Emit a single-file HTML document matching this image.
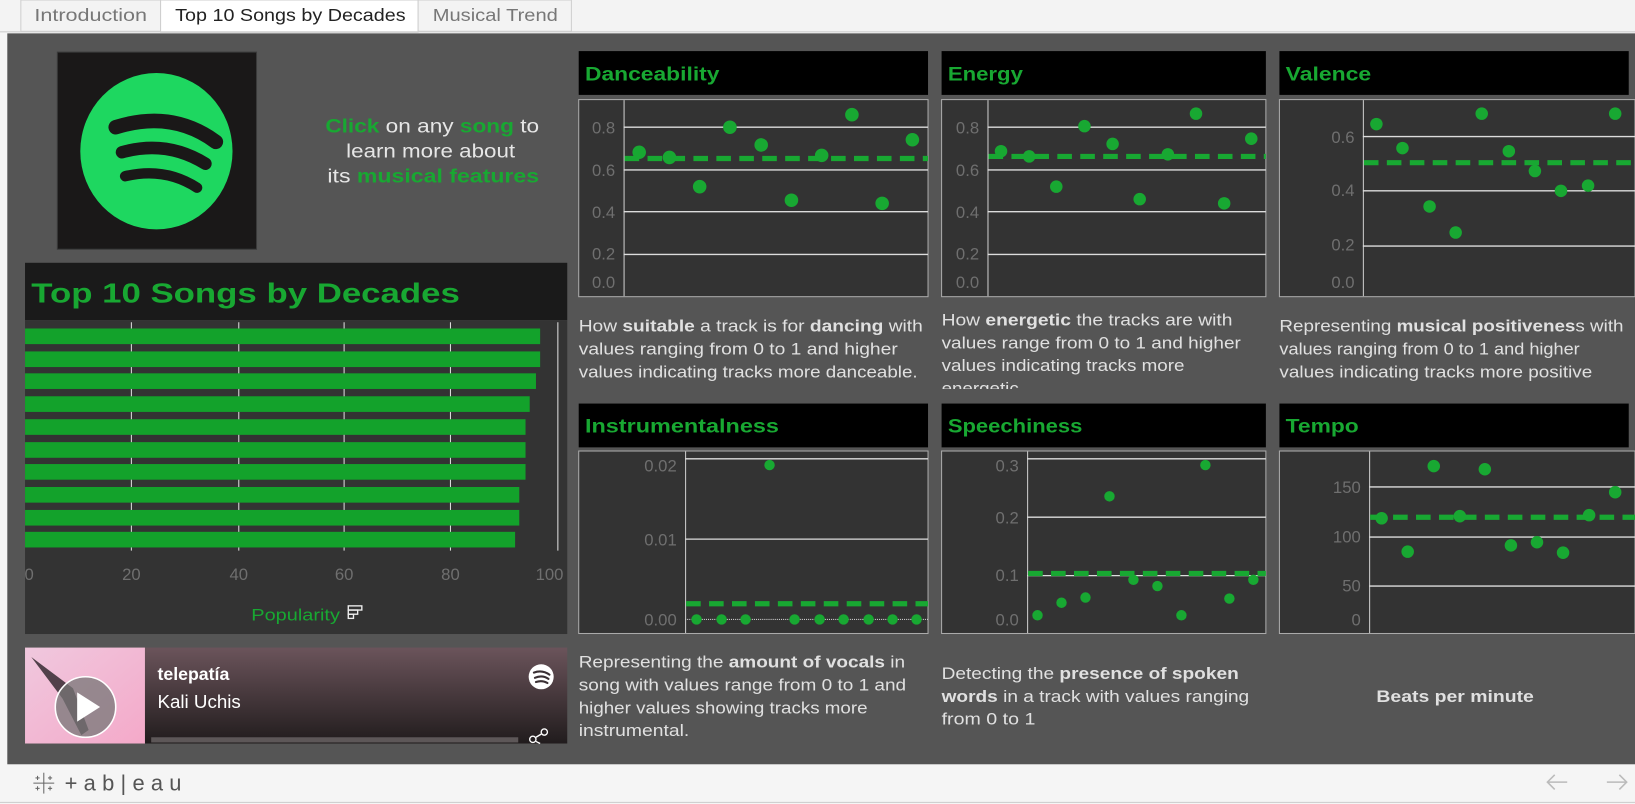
<!DOCTYPE html>
<html><head><meta charset="utf-8"><style>
html,body{margin:0;padding:0;width:1635px;height:804px;overflow:hidden;background:#f5f5f5}
svg{display:block}
text{font-family:"Liberation Sans",sans-serif}
</style></head><body>
<svg width="1635" height="804" viewBox="0 0 1568 771" preserveAspectRatio="none" xmlns="http://www.w3.org/2000/svg">
<!-- tab bar -->
<rect x="0" y="0" width="1568" height="31" fill="#f3f3f3"/>
<rect x="20" y="0" width="134" height="30" fill="#f3f3f3" stroke="#cfcfcf"/>
<rect x="154" y="0" width="247" height="31" fill="#ffffff" stroke="#cfcfcf"/>
<rect x="401" y="0" width="147" height="30" fill="#f3f3f3" stroke="#cfcfcf"/>
<line x1="0" y1="30.5" x2="1568" y2="30.5" stroke="#cfcfcf"/>
<text x="33" y="20" font-size="17" fill="#777" textLength="108" lengthAdjust="spacingAndGlyphs">Introduction</text>
<text x="168" y="20" font-size="17" fill="#222" textLength="221" lengthAdjust="spacingAndGlyphs">Top 10 Songs by Decades</text>
<text x="415" y="20" font-size="17" fill="#777" textLength="120" lengthAdjust="spacingAndGlyphs">Musical Trend</text>
<!-- dashboard -->
<rect x="7" y="32" width="1561" height="701" fill="#555555"/>
<!-- footer -->
<rect x="0" y="733" width="1568" height="38" fill="#f5f5f5"/>
<line x1="0" y1="769.5" x2="1568" y2="769.5" stroke="#d0d0d0"/>
<g stroke="#666" stroke-width="1">
<line x1="42" y1="741" x2="42" y2="761"/><line x1="32" y1="751" x2="52" y2="751"/>
<line x1="36" y1="744" x2="36" y2="748"/><line x1="34" y1="746" x2="38" y2="746"/>
<line x1="48" y1="744" x2="48" y2="748"/><line x1="46" y1="746" x2="50" y2="746"/>
<line x1="36" y1="754" x2="36" y2="758"/><line x1="34" y1="756" x2="38" y2="756"/>
<line x1="48" y1="754" x2="48" y2="758"/><line x1="46" y1="756" x2="50" y2="756"/>
</g>
<text x="62" y="758" font-size="21" fill="#555" letter-spacing="6">+ab|eau</text>
<g stroke="#bbb" stroke-width="1.5" fill="none">
<path d="M1503 750 H1484 M1491 743 L1484 750 L1491 757"/>
<path d="M1541 750 H1560 M1553 743 L1560 750 L1553 757"/>
</g>
<!-- spotify logo -->
<rect x="55" y="50" width="191" height="189" fill="#1a1818" stroke="#3a3a3a"/>
<ellipse cx="150" cy="145" rx="73" ry="75" fill="#1ed760"/>
<g stroke="#1a1818" stroke-linecap="round" fill="none">
<path d="M111 122 Q165 105 207 136" stroke-width="14"/>
<path d="M117 146 Q160 134 197 157" stroke-width="12"/>
<path d="M120 169 Q158 160 189 180" stroke-width="10"/>
</g>
<g font-size="18.5" fill="#e6e6e6">
<text x="312" y="127" textLength="205" lengthAdjust="spacingAndGlyphs"><tspan fill="#18a832" font-weight="bold">Click</tspan> on any <tspan fill="#18a832" font-weight="bold">song</tspan> to</text>
<text x="332" y="151" textLength="162" lengthAdjust="spacingAndGlyphs">learn more about</text>
<text x="314" y="175" textLength="203" lengthAdjust="spacingAndGlyphs">its <tspan fill="#18a832" font-weight="bold">musical features</tspan></text>
</g>
<!-- bar chart -->
<rect x="24" y="252" width="520" height="55" fill="#1a1a1a"/>
<text x="30" y="290" font-size="27" font-weight="bold" fill="#18a832" textLength="411" lengthAdjust="spacingAndGlyphs">Top 10 Songs by Decades</text>
<rect x="24" y="307" width="520" height="301" fill="#333"/>
<g stroke="#ddd" stroke-width="1">
<line x1="126" y1="309" x2="126" y2="528"/><line x1="229" y1="309" x2="229" y2="528"/>
<line x1="330" y1="309" x2="330" y2="528"/><line x1="432" y1="309" x2="432" y2="528"/>
<line x1="535" y1="309" x2="535" y2="528"/>
</g>
<g fill="#13a22b">
<rect x="24" y="315" width="494" height="15"/>
<rect x="24" y="337" width="494" height="15"/>
<rect x="24" y="358" width="490" height="15"/>
<rect x="24" y="380" width="484" height="15"/>
<rect x="24" y="402" width="480" height="15"/>
<rect x="24" y="424" width="480" height="15"/>
<rect x="24" y="445" width="480" height="15"/>
<rect x="24" y="467" width="474" height="15"/>
<rect x="24" y="489" width="474" height="15"/>
<rect x="24" y="510" width="470" height="15"/>
</g>
<g font-size="16" fill="#6f6f6f" text-anchor="middle">
<text x="28" y="556">0</text><text x="126" y="556">20</text><text x="229" y="556">40</text><text x="330" y="556">60</text><text x="432" y="556">80</text><text x="527" y="556">100</text>
</g>
<text x="241" y="595" font-size="16" fill="#18a832" textLength="85" lengthAdjust="spacingAndGlyphs">Popularity</text>
<g fill="none" stroke="#eee" stroke-width="1.3"><rect x="334" y="581" width="13" height="4"/><rect x="334" y="585" width="9" height="4"/><rect x="334" y="589" width="5" height="4"/></g>
<!-- player -->
<defs>
<linearGradient id="pg" x1="0" y1="0" x2="0" y2="1"><stop offset="0" stop-color="#6b545b"/><stop offset="1" stop-color="#211c1d"/></linearGradient>
<linearGradient id="ag" x1="0" y1="0" x2="1" y2="1"><stop offset="0" stop-color="#f0c8de"/><stop offset="1" stop-color="#f4a9c9"/></linearGradient>
</defs>
<rect x="139" y="621" width="405" height="92" fill="url(#pg)"/>
<rect x="24" y="621" width="115" height="92" fill="url(#ag)"/>
<path d="M30 630 L70 660 L85 700 L78 705 L60 670 Z" fill="#2b2027" opacity="0.8"/>
<circle cx="82" cy="678" r="29" fill="#777" fill-opacity="0.75" stroke="#fff" stroke-width="1.5"/>
<path d="M74 664 L96 678 L74 692 Z" fill="#fff"/>
<text x="151" y="652" font-size="17" font-weight="bold" fill="#fff">telepatía</text>
<text x="151" y="679" font-size="18" fill="#fff">Kali Uchis</text>
<circle cx="519" cy="649" r="12" fill="#fff"/>
<g stroke="#3a2f33" stroke-width="2" fill="none" stroke-linecap="round"><path d="M512 645 Q520 642 527 647"/><path d="M513 650 Q520 647 526 651"/><path d="M514 654 Q520 652 525 655"/></g>
<rect x="145" y="707" width="352" height="5" fill="#5d5758"/>
<g stroke="#fff" stroke-width="1.3" fill="none"><circle cx="522" cy="702" r="3"/><circle cx="511" cy="709" r="3"/><line x1="519" y1="704" x2="514" y2="707"/><line x1="514" y1="711" x2="518" y2="713"/></g>

<!-- feature panels -->
<g font-size="19" font-weight="bold" fill="#18a832">
<rect x="555" y="49" width="335" height="42" fill="#000"/><text x="561" y="77" textLength="129" lengthAdjust="spacingAndGlyphs">Danceability</text>
<rect x="903" y="49" width="311" height="42" fill="#000"/><text x="909" y="77" textLength="72" lengthAdjust="spacingAndGlyphs">Energy</text>
<rect x="1227" y="49" width="335" height="42" fill="#000"/><text x="1233" y="77" textLength="82" lengthAdjust="spacingAndGlyphs">Valence</text>
<rect x="555" y="387" width="335" height="42" fill="#000"/><text x="561" y="415" textLength="186" lengthAdjust="spacingAndGlyphs">Instrumentalness</text>
<rect x="903" y="387" width="311" height="42" fill="#000"/><text x="909" y="415" textLength="129" lengthAdjust="spacingAndGlyphs">Speechiness</text>
<rect x="1227" y="387" width="335" height="42" fill="#000"/><text x="1233" y="415" textLength="70" lengthAdjust="spacingAndGlyphs">Tempo</text>
</g>
<g fill="#333" stroke="#aaa" stroke-width="1">
<rect x="555" y="95.5" width="335" height="189"/>
<rect x="903" y="95.5" width="311" height="189"/>
<rect x="1227" y="95.5" width="341" height="189"/>
<rect x="555" y="432.5" width="335" height="175"/>
<rect x="903" y="432.5" width="311" height="175"/>
<rect x="1227" y="432.5" width="341" height="175"/>
</g>
<g stroke="#ccc" stroke-width="1">
<line x1="598.5" y1="96" x2="598.5" y2="284"/><line x1="947.5" y1="96" x2="947.5" y2="284"/><line x1="1307.5" y1="96" x2="1307.5" y2="284"/>
<line x1="657.5" y1="433" x2="657.5" y2="607"/><line x1="985.5" y1="433" x2="985.5" y2="607"/><line x1="1313.5" y1="433" x2="1313.5" y2="607"/>
</g>
<g stroke="#ddd" stroke-width="1.3">
<line x1="598" y1="122" x2="890" y2="122"/><line x1="598" y1="163" x2="890" y2="163"/><line x1="598" y1="203" x2="890" y2="203"/><line x1="598" y1="244" x2="890" y2="244"/>
<line x1="947" y1="122" x2="1214" y2="122"/><line x1="947" y1="163" x2="1214" y2="163"/><line x1="947" y1="203" x2="1214" y2="203"/><line x1="947" y1="244" x2="1214" y2="244"/>
<line x1="1307" y1="131" x2="1568" y2="131"/><line x1="1307" y1="183" x2="1568" y2="183"/><line x1="1307" y1="236" x2="1568" y2="236"/>
<line x1="657" y1="440" x2="890" y2="440"/><line x1="657" y1="517" x2="890" y2="517"/>
<line x1="985" y1="440" x2="1214" y2="440"/><line x1="985" y1="496" x2="1214" y2="496"/><line x1="985" y1="552" x2="1214" y2="552"/>
<line x1="1313" y1="467" x2="1568" y2="467"/><line x1="1313" y1="515" x2="1568" y2="515"/><line x1="1313" y1="562" x2="1568" y2="562"/>
</g>
<line x1="657" y1="594" x2="890" y2="594" stroke="#ccc" stroke-width="1" stroke-dasharray="1 1"/>
<g font-size="16" fill="#6f6f6f" text-anchor="end">
<text x="590" y="128">0.8</text><text x="590" y="169">0.6</text><text x="590" y="209">0.4</text><text x="590" y="249">0.2</text><text x="590" y="276">0.0</text>
<text x="939" y="128">0.8</text><text x="939" y="169">0.6</text><text x="939" y="209">0.4</text><text x="939" y="249">0.2</text><text x="939" y="276">0.0</text>
<text x="1299" y="137">0.6</text><text x="1299" y="188">0.4</text><text x="1299" y="240">0.2</text><text x="1299" y="276">0.0</text>
<text x="649" y="452">0.02</text><text x="649" y="523">0.01</text><text x="649" y="600">0.00</text>
<text x="977" y="452">0.3</text><text x="977" y="502">0.2</text><text x="977" y="557">0.1</text><text x="977" y="600">0.0</text>
<text x="1305" y="473">150</text><text x="1305" y="520">100</text><text x="1305" y="567">50</text><text x="1305" y="600">0</text>
</g>
<g stroke="#18a832" stroke-width="5" stroke-dasharray="14 8">
<line x1="599" y1="152" x2="890" y2="152"/>
<line x1="948" y1="150" x2="1214" y2="150"/>
<line x1="1308" y1="156" x2="1568" y2="156"/>
<line x1="658" y1="579" x2="890" y2="579"/>
<line x1="986" y1="550" x2="1214" y2="550"/>
<line x1="1314" y1="496" x2="1568" y2="496"/>
</g>
<g fill="#18a832">
<circle cx="613" cy="146" r="6.5"/><circle cx="642" cy="151" r="6.5"/><circle cx="671" cy="179" r="6.5"/><circle cx="700" cy="122" r="6.5"/><circle cx="730" cy="139" r="6.5"/><circle cx="759" cy="192" r="6.5"/><circle cx="788" cy="149" r="6.5"/><circle cx="817" cy="110" r="6.5"/><circle cx="846" cy="195" r="6.5"/><circle cx="875" cy="134" r="6.5"/>
<circle cx="960" cy="145" r="6"/><circle cx="987" cy="150" r="6"/><circle cx="1013" cy="179" r="6"/><circle cx="1040" cy="121" r="6"/><circle cx="1067" cy="138" r="6"/><circle cx="1093" cy="191" r="6"/><circle cx="1120" cy="148" r="6"/><circle cx="1147" cy="109" r="6"/><circle cx="1174" cy="195" r="6"/><circle cx="1200" cy="133" r="6"/>
<circle cx="1320" cy="119" r="6"/><circle cx="1345" cy="142" r="6"/><circle cx="1371" cy="198" r="6"/><circle cx="1396" cy="223" r="6"/><circle cx="1421" cy="109" r="6"/><circle cx="1447" cy="145" r="6"/><circle cx="1472" cy="164" r="6"/><circle cx="1497" cy="183" r="6"/><circle cx="1523" cy="178" r="6"/><circle cx="1549" cy="109" r="6"/>
<circle cx="668" cy="594" r="5"/><circle cx="692" cy="594" r="5"/><circle cx="715" cy="594" r="5"/><circle cx="738" cy="446" r="5"/><circle cx="762" cy="594" r="5"/><circle cx="786" cy="594" r="5"/><circle cx="809" cy="594" r="5"/><circle cx="833" cy="594" r="5"/><circle cx="856" cy="594" r="5"/><circle cx="879" cy="594" r="5"/>
<circle cx="995" cy="590" r="5"/><circle cx="1018" cy="578" r="5"/><circle cx="1041" cy="573" r="5"/><circle cx="1064" cy="476" r="5"/><circle cx="1087" cy="556" r="5"/><circle cx="1110" cy="562" r="5"/><circle cx="1133" cy="590" r="5"/><circle cx="1156" cy="446" r="5"/><circle cx="1179" cy="574" r="5"/><circle cx="1202" cy="556" r="5"/>
<circle cx="1325" cy="497" r="6"/><circle cx="1350" cy="529" r="6"/><circle cx="1375" cy="447" r="6"/><circle cx="1400" cy="495" r="6"/><circle cx="1424" cy="450" r="6"/><circle cx="1449" cy="523" r="6"/><circle cx="1474" cy="520" r="6"/><circle cx="1499" cy="530" r="6"/><circle cx="1524" cy="494" r="6"/><circle cx="1549" cy="472" r="6"/>
</g>
<!-- descriptions -->
<g font-size="15.5" fill="#e0e0e0">
<text x="555" y="318" textLength="330" lengthAdjust="spacingAndGlyphs">How <tspan font-weight="bold">suitable</tspan> a track is for <tspan font-weight="bold">dancing</tspan> with</text>
<text x="555" y="340" textLength="306" lengthAdjust="spacingAndGlyphs">values ranging from 0 to 1 and higher</text>
<text x="555" y="362" textLength="325" lengthAdjust="spacingAndGlyphs">values indicating tracks more danceable.</text>
<text x="903" y="312" textLength="279" lengthAdjust="spacingAndGlyphs">How <tspan font-weight="bold">energetic</tspan> the tracks are with</text>
<text x="903" y="334" textLength="287" lengthAdjust="spacingAndGlyphs">values range from 0 to 1 and higher</text>
<text x="903" y="356" textLength="233" lengthAdjust="spacingAndGlyphs">values indicating tracks more</text>
<text x="1227" y="318" textLength="330" lengthAdjust="spacingAndGlyphs">Representing <tspan font-weight="bold">musical positivenes</tspan>s with</text>
<text x="1227" y="340" textLength="288" lengthAdjust="spacingAndGlyphs">values ranging from 0 to 1 and higher</text>
<text x="1227" y="362" textLength="300" lengthAdjust="spacingAndGlyphs">values indicating tracks more positive</text>
<text x="555" y="640" textLength="313" lengthAdjust="spacingAndGlyphs">Representing the <tspan font-weight="bold">amount of vocals</tspan> in</text>
<text x="555" y="662" textLength="314" lengthAdjust="spacingAndGlyphs">song with values range from 0 to 1 and</text>
<text x="555" y="684" textLength="277" lengthAdjust="spacingAndGlyphs">higher values showing tracks more</text>
<text x="555" y="706" textLength="106" lengthAdjust="spacingAndGlyphs">instrumental.</text>
<text x="903" y="651" textLength="285" lengthAdjust="spacingAndGlyphs">Detecting the <tspan font-weight="bold">presence of spoken</tspan></text>
<text x="903" y="673" textLength="295" lengthAdjust="spacingAndGlyphs"><tspan font-weight="bold">words</tspan> in a track with values ranging</text>
<text x="903" y="695" textLength="90" lengthAdjust="spacingAndGlyphs">from 0 to 1</text>
<text x="1320" y="673" font-weight="bold" textLength="151" lengthAdjust="spacingAndGlyphs">Beats per minute</text>
</g>
<clipPath id="ec"><rect x="903" y="365" width="311" height="8"/></clipPath>
<text x="903" y="378" font-size="15.5" fill="#e0e0e0" clip-path="url(#ec)" textLength="74" lengthAdjust="spacingAndGlyphs">energetic</text>
</svg>
</body></html>
